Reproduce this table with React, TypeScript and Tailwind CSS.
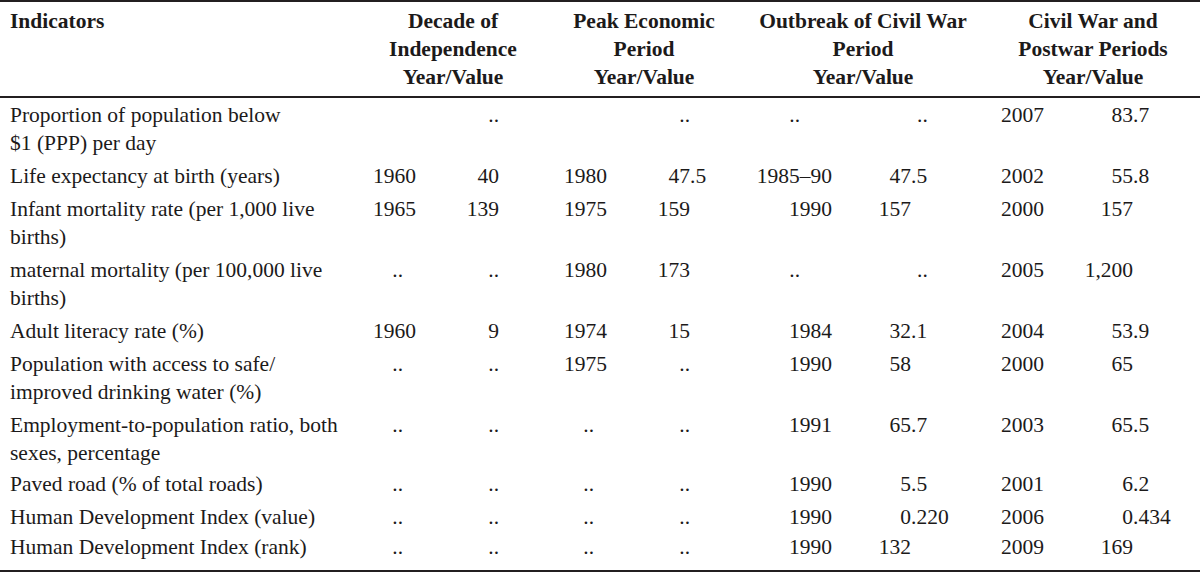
type Pair = [string, string];

interface Group {
  title: string[];
  width: string;
  yearBox: string;
  intBox: string;
  yearDots: string;
  dotsInFrac: boolean;
}

const groups: Group[] = [
  {
    title: ["Decade of", "Independence", "Year/Value"],
    width: "w-[196px]",
    yearBox: "w-[61px]",
    intBox: "w-[83px]",
    yearDots: "pr-[13px]",
    dotsInFrac: false,
  },
  {
    title: ["Peak Economic", "Period", "Year/Value"],
    width: "w-[186px]",
    yearBox: "w-[56px]",
    intBox: "w-[83px]",
    yearDots: "pr-[13px]",
    dotsInFrac: false,
  },
  {
    title: ["Outbreak of Civil War", "Period", "Year/Value"],
    width: "w-[252px]",
    yearBox: "w-[95px]",
    intBox: "w-[79px]",
    yearDots: "pr-[32px]",
    dotsInFrac: true,
  },
  {
    title: ["Civil War and", "Postwar Periods", "Year/Value"],
    width: "w-[208px]",
    yearBox: "w-[55px]",
    intBox: "w-[89px]",
    yearDots: "pr-0",
    dotsInFrac: false,
  },
];

const rows: { label: string[]; cells: Pair[]; pad?: string }[] = [
  {
    label: ["Proportion of population below", "$1 (PPP) per day"],
    cells: [["", ".."], ["", ".."], ["..", ".."], ["2007", "83.7"]],
  },
  {
    label: ["Life expectancy at birth (years)"],
    cells: [["1960", "40"], ["1980", "47.5"], ["1985–90", "47.5"], ["2002", "55.8"]],
  },
  {
    label: ["Infant mortality rate (per 1,000 live", "births)"],
    cells: [["1965", "139"], ["1975", "159"], ["1990", "157"], ["2000", "157"]],
  },
  {
    label: ["maternal mortality (per 100,000 live", "births)"],
    cells: [["..", ".."], ["1980", "173"], ["..", ".."], ["2005", "1,200"]],
  },
  {
    label: ["Adult literacy rate (%)"],
    cells: [["1960", "9"], ["1974", "15"], ["1984", "32.1"], ["2004", "53.9"]],
  },
  {
    label: ["Population with access to safe/", "improved drinking water (%)"],
    cells: [["..", ".."], ["1975", ".."], ["1990", "58"], ["2000", "65"]],
  },
  {
    label: ["Employment-to-population ratio, both", "sexes, percentage"],
    cells: [["..", ".."], ["..", ".."], ["1991", "65.7"], ["2003", "65.5"]],
  },
  {
    label: ["Paved road (% of total roads)"],
    cells: [["..", ".."], ["..", ".."], ["1990", "5.5"], ["2001", "6.2"]],
    pad: "pt-[0.5px] pb-[2.5px]",
  },
  {
    label: ["Human Development Index (value)"],
    cells: [["..", ".."], ["..", ".."], ["1990", "0.220"], ["2006", "0.434"]],
  },
  {
    label: ["Human Development Index (rank)"],
    cells: [["..", ".."], ["..", ".."], ["1990", "132"], ["2009", "169"]],
    pad: "pt-0 pb-[7px]",
  },
];

// split a value so the decimal points line up
function splitValue(v: string): [string, string] {
  if (v === "..") return ["..", ""];
  const i = v.indexOf(".");
  return i < 0 ? [v, ""] : [v.slice(0, i), v.slice(i)];
}

function ValueCell({ group, pair }: { group: Group; pair: Pair }) {
  const [year, value] = pair;
  const dotsShift = value === ".." && group.dotsInFrac;
  const [intPart, fracPart] = dotsShift ? ["", ".."] : splitValue(value);

  return (
    <div className={`${group.width} flex items-start`}>
      <div
        className={`${group.yearBox} shrink-0 text-right whitespace-nowrap ${
          year === ".." ? group.yearDots : ""
        }`}
      >
        {year}
      </div>
      <div className={`${group.intBox} shrink-0 text-right whitespace-nowrap`}>
        {intPart}
      </div>
      <div className={`whitespace-nowrap ${dotsShift ? "pl-[6px]" : ""}`}>
        {fracPart}
      </div>
    </div>
  );
}

export default function App() {
  return (
    <div className="w-[1200px] h-[572px] bg-white text-[#1c1a1a] font-['Liberation_Serif','Times_New_Roman',serif] text-[21.5px] leading-[28px] border-t-2 border-b-2 border-[#231f20]">
      {/* Header */}
      <div className="flex items-start pt-[5px] pb-[5px] border-b-2 border-[#231f20] font-bold">
        <div className="w-[355px] pl-[10px]">Indicators</div>
        {groups.map((g) => (
          <div key={g.title[0]} className={`${g.width} text-center`}>
            {g.title.map((line) => (
              <div key={line} className="whitespace-nowrap">
                {line}
              </div>
            ))}
          </div>
        ))}
      </div>

      {/* Body */}
      <div>
        {rows.map((row) => (
          <div
            key={row.label.join(" ")}
            className={`flex items-start ${row.pad ?? "py-[2.5px]"}`}
          >
            <div className="w-[355px] pl-[10px]">
              {row.label.map((line) => (
                <div key={line} className="whitespace-nowrap">
                  {line}
                </div>
              ))}
            </div>
            {groups.map((g, i) => (
              <ValueCell key={g.title[0]} group={g} pair={row.cells[i]} />
            ))}
          </div>
        ))}
      </div>
    </div>
  );
}
